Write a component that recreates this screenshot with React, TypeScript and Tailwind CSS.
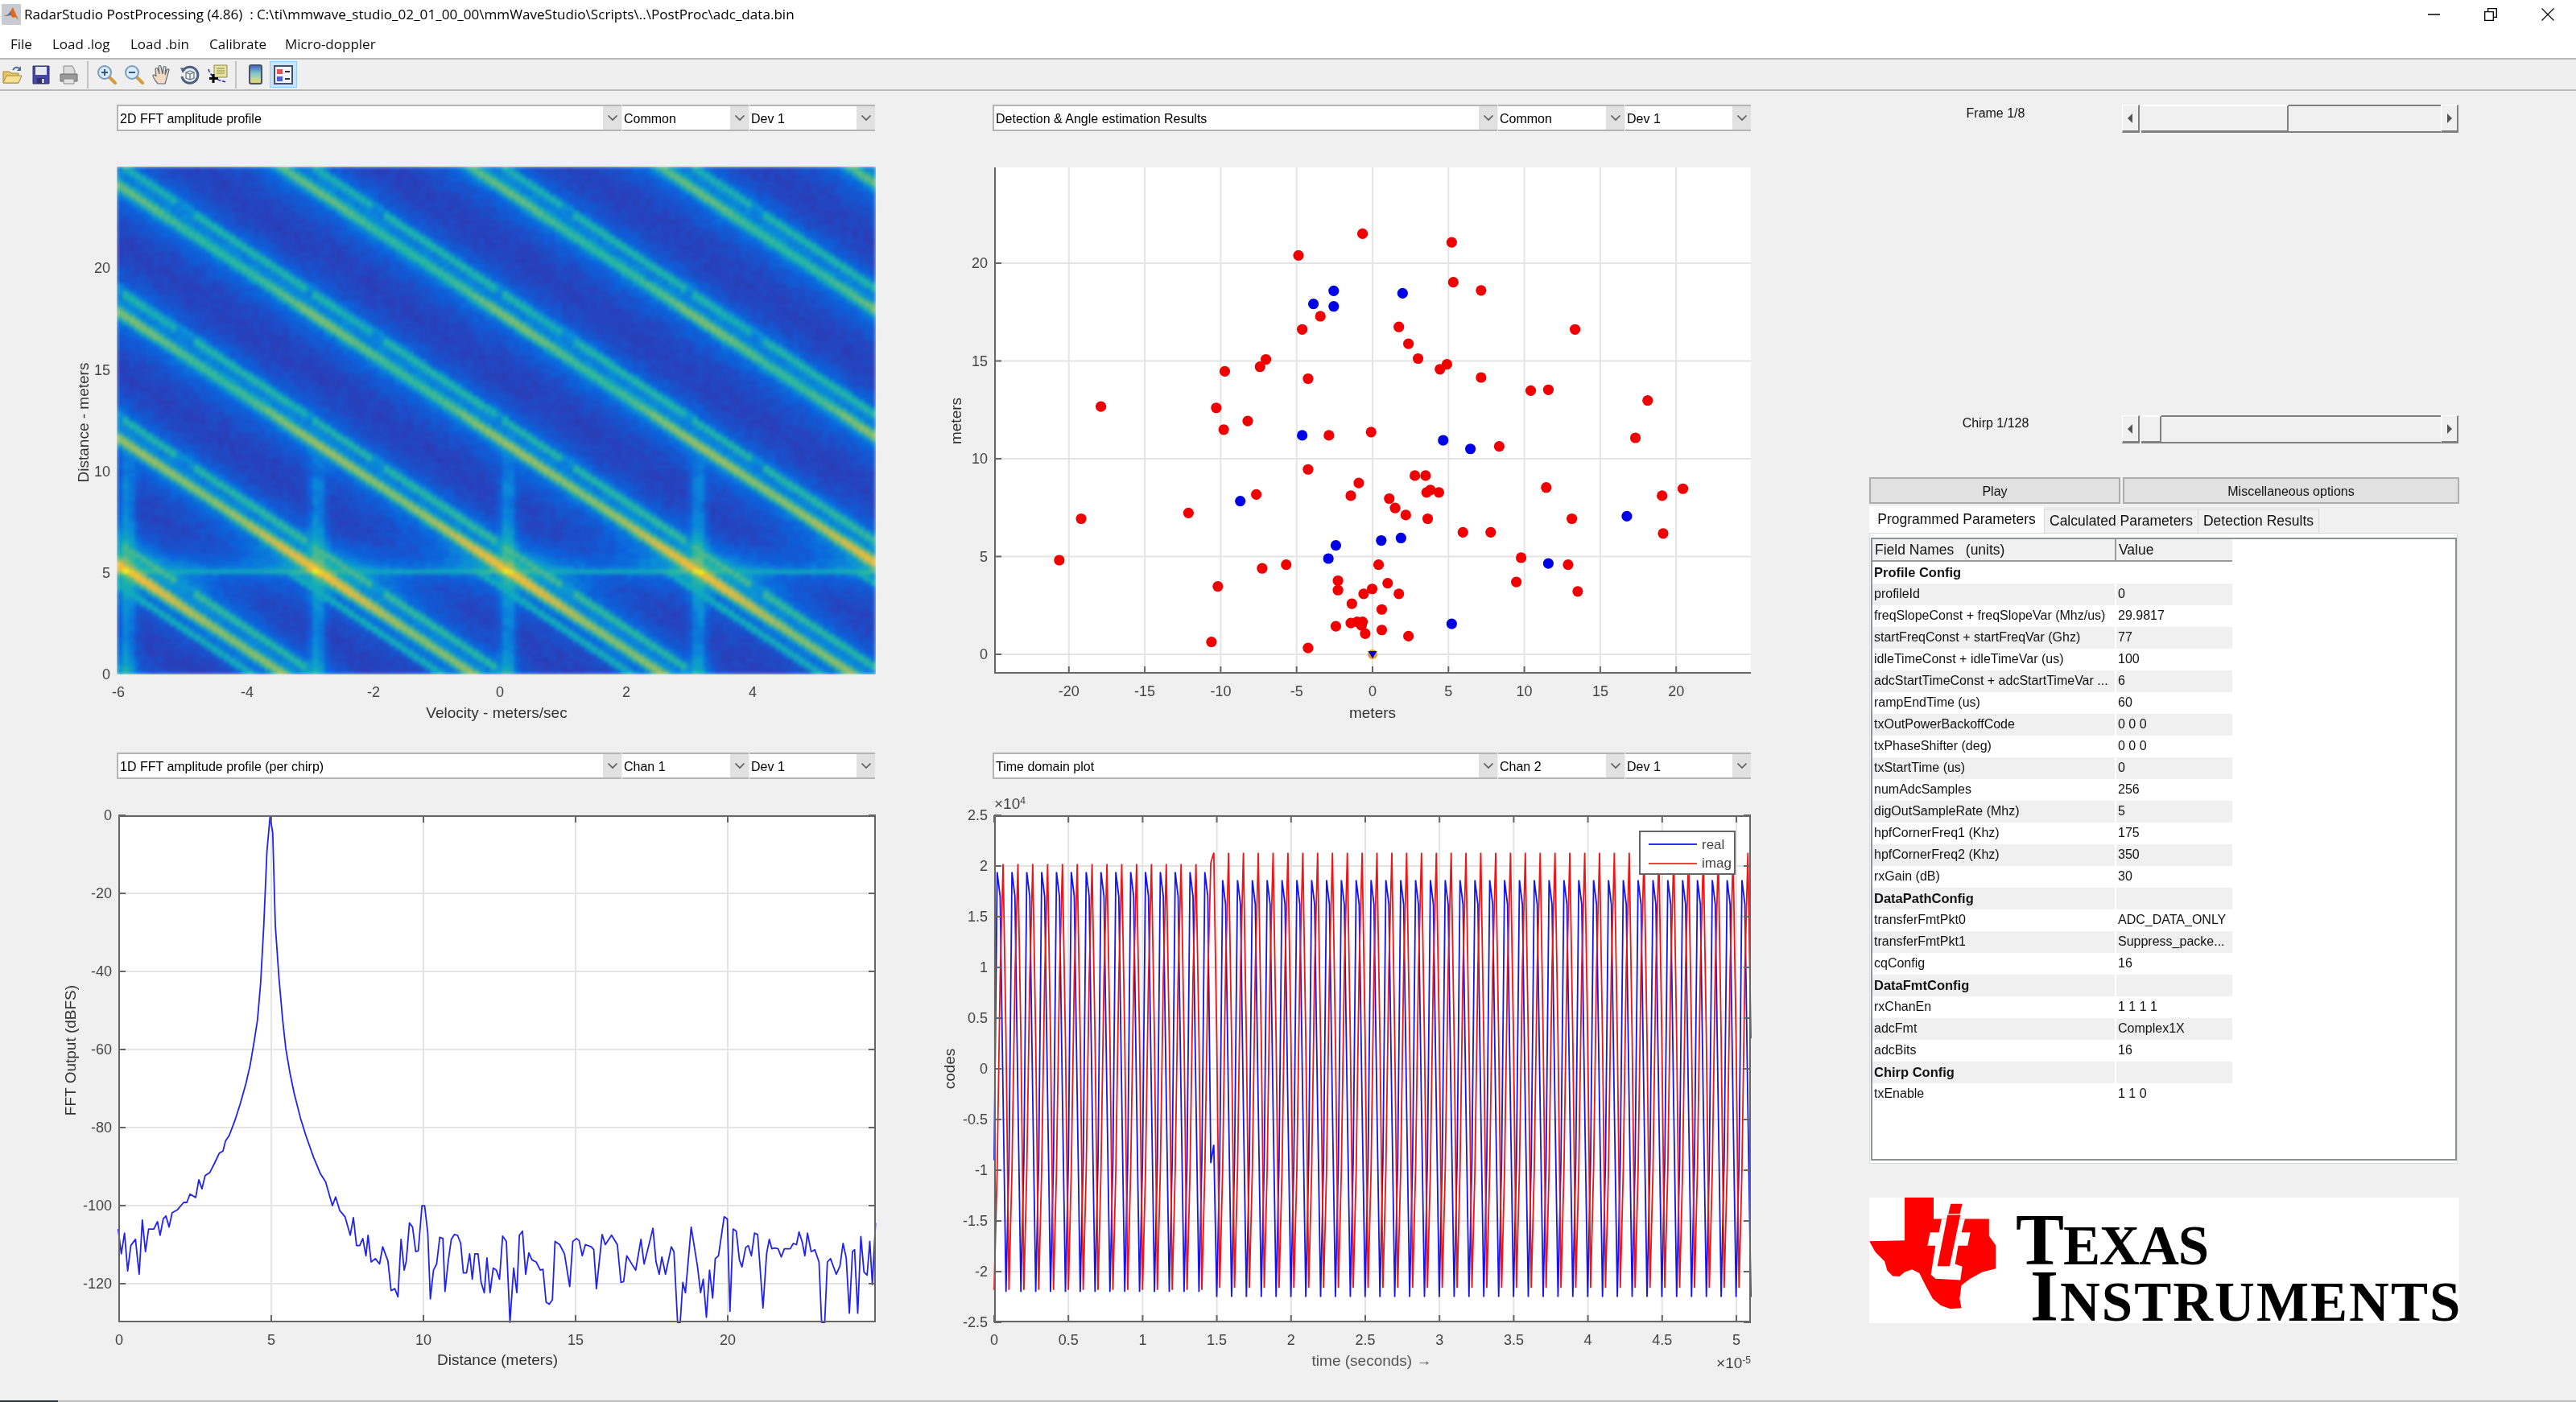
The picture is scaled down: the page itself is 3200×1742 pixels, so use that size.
import React from "react";

const sans = "font-['Liberation_Sans',Arial,sans-serif]";

/* ---------- heatmap ---------- */
const stops: [number, number[]][] = [
  [0, [43, 42, 154]], [0.12, [42, 61, 184]], [0.25, [10, 98, 220]], [0.36, [10, 142, 216]],
  [0.46, [16, 170, 188]], [0.55, [47, 185, 154]], [0.66, [141, 189, 104]], [0.8, [216, 186, 72]],
  [0.9, [248, 187, 56]], [1, [249, 249, 15]],
];
function cmap(v: number) {
  v = Math.max(0, Math.min(1, v));
  for (let i = 1; i < stops.length; i++) {
    if (v <= stops[i][0]) {
      const [a, ca] = stops[i - 1];
      const [b, cb] = stops[i];
      const t = (v - a) / (b - a);
      const c = ca.map((q, j) => Math.round(q + (cb[j] - q) * t));
      return `rgb(${c[0]},${c[1]},${c[2]})`;
    }
  }
  return "rgb(249,249,15)";
}
function heatPaths(w: number, h: number) {
  const cols = 128, rows = 126;
  let seed = 12345;
  const rnd = () => { seed = (seed * 1664525 + 1013904223) >>> 0; return seed / 4294967296; };
  const mod = (a: number, b: number) => ((a % b) + b) % b;
  const groups: Record<string, string> = {};
  const cw = w / cols, ch = h / rows;
  for (let r = 0; r < rows; r++) {
    for (let c = 0; c < cols; c++) {
      const zx = 70 + (c + 0.5) * (1448 / cols);
      const zy = 38 + (r + 0.5) * (1374 / rows);
      const d = zy - (1130 + 0.945 * (zx - 90));
      const m = mod(d + 171, 342) - 171;
      const rowDist = Math.abs(zy - 1133);
      const amp = 0.59 + 0.05 * Math.cos((2 * Math.PI * (zx - 90)) / 363) + 0.31 * Math.exp(-rowDist / 260);
      const main = Math.exp(-((m / 26) ** 2)) * amp;
      const g1 = mod(zx - 435 + 181, 363) - 181;
      const g2 = mod(zx - 565 + 181, 363) - 181;
      const gap = Math.abs(g1) < 8 || Math.abs(g2) < 14;
      const tm = m + 58 + (gap ? 8 : 0);
      const teal = Math.exp(-((tm / 21) ** 2)) * (gap ? 0.38 : 0.53 + 0.08 * Math.exp(-rowDist / 200));
      const tm2 = m - 56;
      const teal2 = zy > 1133 ? Math.exp(-((tm2 / 19) ** 2)) * 0.5 : 0;
      const base = 0.085 + rnd() * 0.055;
      const skirt = 0.24 * Math.exp(-Math.abs(m) / 66) + 0.12 * Math.exp(-Math.abs(m + 58) / 42);
      const glow = 0.2 * Math.exp(-rowDist / 45) * (zy < 1133 ? 1 : 0.7);
      const dx = mod(zx - 90 + 181, 363) - 181;
      const vFade = zy > 900 ? 1 : Math.exp((zy - 900) / 60);
      const vert = 0.2 * Math.exp(-((dx / 15) ** 2)) * vFade;
      const line = Math.exp(-((rowDist / 9) ** 2)) * (0.47 + 0.15 * Math.exp(-((dx / 60) ** 2)));
      const spot = Math.exp(-((dx / 24) ** 2) - ((rowDist / 15) ** 2)) * 1.04;
      const v = Math.max(base + skirt + glow + vert, main, teal, teal2, line, spot);
      const q = cmap(Math.round(v * 110) / 110);
      groups[q] = (groups[q] || "") + `M${(c * cw).toFixed(2)} ${(r * ch).toFixed(2)}h${(cw + 0.4).toFixed(2)}v${(ch + 0.4).toFixed(2)}h-${(cw + 0.4).toFixed(2)}z`;
    }
  }
  return Object.entries(groups);
}

/* ---------- data ---------- */
const red = [[803,334],[970,355],[683,387],[973,452],[1025,472],[724,535],[690,567],[871,561],[1201,567],[889,602],[907,638],[622,640],[611,658],[545,669],[961,652],[948,664],[701,687],[1025,684],[1118,716],[1151,714],[1337,740],[313,755],[529,758],[588,790],[543,811],[740,825],[819,817],[1314,831],[1059,852],[701,908],[901,923],[921,923],[796,941],[1147,952],[1403,955],[604,969],[781,972],[923,964],[930,958],[946,964],[1364,972],[853,979],[864,1002],[477,1014],[884,1019],[276,1028],[925,1028],[1195,1028],[991,1061],[1043,1061],[1366,1064],[1100,1123],[235,1129],[660,1140],[833,1140],[1188,1140],[615,1149],[757,1179],[850,1185],[1091,1182],[532,1193],[757,1202],[821,1199],[805,1211],[871,1211],[1206,1205],[783,1235],[839,1249],[781,1282],[793,1279],[803,1279],[801,1288],[753,1290],[839,1299],[808,1308],[889,1314],[520,1328],[701,1343]];
const blue = [[749,473],[711,505],[749,511],[878,479],[690,825],[954,837],[1005,858],[574,985],[1298,1022],[838,1081],[875,1075],[753,1093],[739,1125],[1151,1137],[970,1284]];
const fft = [[72,1190],[78,1250],[84,1200],[90,1292],[96,1230],[105,1215],[112,1300],[118,1168],[124,1245],[130,1190],[140,1190],[147,1172],[152,1205],[158,1165],[163,1158],[169,1185],[175,1150],[185,1143],[197,1125],[203,1125],[209,1105],[220,1113],[226,1070],[232,1092],[238,1060],[247,1052],[255,1032],[265,1005],[272,1000],[277,975],[284,962],[295,925],[305,885],[316,835],[324,790],[332,730],[338,680],[344,590],[350,450],[356,270],[362,185],[367,225],[372,450],[379,580],[386,680],[392,750],[400,810],[408,860],[420,920],[431,965],[445,1015],[458,1055],[468,1075],[481,1133],[487,1112],[495,1145],[505,1160],[515,1205],[521,1162],[527,1230],[533,1230],[539,1213],[545,1255],[549,1205],[555,1270],[563,1262],[571,1275],[577,1233],[587,1268],[593,1340],[600,1335],[606,1355],[612,1215],[618,1290],[622,1268],[628,1175],[634,1185],[640,1245],[645,1243],[652,1133],[657,1133],[663,1200],[668,1360],[674,1290],[680,1275],[686,1210],[692,1213],[696,1342],[702,1270],[708,1215],[714,1203],[720,1205],[726,1225],[731,1297],[737,1297],[743,1250],[748,1312],[753,1250],[759,1250],[765,1320],[771,1345],[776,1260],[782,1345],[788,1285],[794,1290],[800,1312],[806,1207],[813,1220],[820,1417],[827,1285],[833,1345],[838,1205],[844,1195],[850,1300],[856,1248],[862,1265],[870,1270],[878,1290],[883,1288],[889,1368],[895,1373],[901,1362],[906,1220],[915,1228],[924,1250],[934,1330],[940,1220],[947,1213],[952,1218],[958,1255],[964,1228],[975,1233],[980,1240],[985,1335],[996,1203],[1002,1228],[1014,1205],[1025,1228],[1032,1320],[1037,1318],[1043,1255],[1055,1280],[1060,1290],[1070,1215],[1076,1275],[1085,1230],[1093,1188],[1099,1270],[1105,1300],[1110,1258],[1117,1300],[1128,1233],[1133,1245],[1140,1417],[1145,1417],[1150,1320],[1155,1345],[1166,1185],[1178,1280],[1184,1345],[1189,1312],[1195,1405],[1201,1290],[1207,1358],[1212,1262],[1218,1255],[1229,1160],[1235,1165],[1240,1390],[1246,1190],[1252,1195],[1258,1265],[1263,1282],[1270,1235],[1275,1230],[1281,1255],[1287,1200],[1293,1203],[1303,1382],[1310,1250],[1315,1215],[1320,1238],[1326,1236],[1332,1238],[1338,1258],[1344,1238],[1355,1238],[1361,1225],[1367,1228],[1372,1197],[1378,1222],[1383,1255],[1388,1200],[1395,1245],[1402,1240],[1410,1270],[1415,1417],[1421,1417],[1426,1270],[1432,1262],[1443,1300],[1450,1280],[1456,1225],[1462,1260],[1468,1395],[1474,1245],[1478,1240],[1484,1395],[1490,1208],[1496,1295],[1502,1302],[1507,1220],[1512,1325],[1518,1175]];

function wave() {
  const b: string[] = [], r: string[] = [];
  const h = 630, w = 940, ppu = 126, dx = w / 255;
  const b1 = [1.94, 1.7, -0.3, -2.2, -0.9], r1 = [2.02, 0.3, -2.18, -1.0, 0.9];
  const b2 = [1.86, 1.62, -0.4, -2.25, -0.9], r2 = [2.13, 0.3, -2.16, -1.0, 1.0];
  for (let n = 0; n < 256; n++) {
    let vb: number, vr: number;
    if (n < 73) { vb = b1[((n - 1) % 5 + 5) % 5]; vr = r1[((n - 3) % 5 + 5) % 5]; }
    else if (n === 73) { vb = -0.93; vr = 2.03; }
    else if (n === 74) { vb = -0.75; vr = 2.13; }
    else { vb = b2[((n - 2) % 5 + 5) % 5]; vr = r2[((n - 4) % 5 + 5) % 5]; }
    b.push(`${(n * dx).toFixed(1)},${(h / 2 - vb * ppu).toFixed(1)}`);
    r.push(`${(n * dx).toFixed(1)},${(h / 2 - vr * ppu).toFixed(1)}`);
  }
  return { b: b.join(" "), r: r.join(" ") };
}

const rows: [string, string, number?][] = [
  ["Profile Config", "", 1], ["profileId", "0"], ["freqSlopeConst + freqSlopeVar (Mhz/us)", "29.9817"],
  ["startFreqConst + startFreqVar (Ghz)", "77"], ["idleTimeConst + idleTimeVar (us)", "100"],
  ["adcStartTimeConst + adcStartTimeVar ...", "6"], ["rampEndTime (us)", "60"], ["txOutPowerBackoffCode", "0 0 0"],
  ["txPhaseShifter (deg)", "0 0 0"], ["txStartTime (us)", "0"], ["numAdcSamples", "256"], ["digOutSampleRate (Mhz)", "5"],
  ["hpfCornerFreq1 (Khz)", "175"], ["hpfCornerFreq2 (Khz)", "350"], ["rxGain (dB)", "30"], ["DataPathConfig", "", 1],
  ["transferFmtPkt0", "ADC_DATA_ONLY"], ["transferFmtPkt1", "Suppress_packe..."], ["cqConfig", "16"], ["DataFmtConfig", "", 1],
  ["rxChanEn", "1 1 1 1"], ["adcFmt", "Complex1X"], ["adcBits", "16"], ["Chirp Config", "", 1], ["txEnable", "1 1 0"],
];

/* ---------- small pieces ---------- */
function Chevron() {
  return (
    <svg width="14" height="9" viewBox="0 0 14 9" fill="none" stroke="#5a5a5a" strokeWidth="1.6">
      <path d="M1.5 1.5 7 7l5.500-5.500" />
    </svg>
  );
}
function Sel({ text, w }: { text: string; w: string }) {
  return (
    <div className={`${w} h-full flex bg-white border-y-2 border-[#b4b4b4] first:border-l-2`}>
      <div className="flex-1 pl-[2px] pt-[2px] flex items-center text-[16px] leading-none text-black whitespace-nowrap overflow-hidden">{text}</div>
      <div className="w-[23px] bg-[#e1e1e1] flex items-center justify-center"><Chevron /></div>
    </div>
  );
}
function SelRow({ a, b, c }: { a: string; b: string; c: string }) {
  return (
    <div className="h-[33px] flex gap-[1px] pr-0">
      <Sel text={a} w="w-[627px]" />
      <Sel text={b} w="w-[157px]" />
      <Sel text={c} w="w-[156px]" />
    </div>
  );
}

type T = [number, string];
function Axes({ w, h, xt, yt, xl, yl, xlx, yly, box = true, lx = 66, children, tickY = 27, xlY = 52, grid = true, muted }: {
  w: number; h: number; xt: T[]; yt: T[]; xl: string; yl: string; xlx: number; yly: number; box?: boolean; lx?: number;
  children?: React.ReactNode; tickY?: number; xlY?: number; grid?: boolean; muted?: boolean;
}) {
  return (
    <svg width={w} height={h} viewBox={`0 0 ${w} ${h}`} className="block overflow-visible">
      {grid && xt.map(([x], i) => <line key={i} x1={x} x2={x} y1={0} y2={h} stroke="#e4e4e4" strokeWidth="2" />)}
      {grid && yt.map(([y], i) => <line key={i} x1={0} x2={w} y1={y} y2={y} stroke="#e4e4e4" strokeWidth="2" />)}
      {children}
      {grid && (
        <g stroke="#666" strokeWidth="2" fill="none">
          <path d={box ? `M1 1H${w - 1}V${h - 1}H1Z` : `M1 0V${h - 1}H${w}`} />
          {xt.map(([x], i) => <path key={i} d={box ? `M${x} ${h}v-9M${x} 0v9` : `M${x} ${h}v-9`} />)}
          {yt.map(([y], i) => <path key={i} d={box ? `M0 ${y}h9M${w} ${y}h-9` : `M0 ${y}h9`} />)}
        </g>
      )}
      <g className="text-[18px] fill-[#444]">
        {xt.map(([x, l], i) => <text key={i} x={x} y={h + tickY} textAnchor="middle">{l}</text>)}
        {yt.map(([y, l], i) => <text key={i} x={-8} y={y + 6} textAnchor="end">{l}</text>)}
        <text x={xlx} y={h + xlY} textAnchor="middle" className={`text-[19px] ${muted ? "fill-[#555]" : "fill-[#333]"}`}>{xl}</text>
        <text transform={`translate(${-lx},${yly}) rotate(-90)`} textAnchor="middle" className="text-[19px] fill-[#333]">{yl}</text>
      </g>
    </svg>
  );
}

function Heat() {
  const w = 943, h = 631;
  const paths = React.useMemo(() => heatPaths(w, h), []);
  const xt: T[] = [[2, "-6"], [162, "-4"], [319, "-2"], [476, "0"], [633, "2"], [790, "4"]].map(([x, l]) => [x as number, l as string]);
  const yt: T[] = [[631, "0"], [505, "5"], [379, "10"], [253, "15"], [126, "20"]].map(([y, l]) => [y as number, l as string]);
  return (
    <div className="relative w-[943px] h-[631px]">
      <div className="w-[943px] h-[631px] overflow-hidden">
        <svg width={w} height={h} viewBox={`0 0 ${w} ${h}`} className="block blur-[2px]" shapeRendering="crispEdges">
          {paths.map(([c, d]) => <path key={c} d={d} fill={c} />)}
        </svg>
      </div>
      <div className="absolute left-0 top-0">
        <Axes w={w} h={h} xt={xt} yt={yt} xl="Velocity - meters/sec" yl="Distance - meters" xlx={472} yly={318} lx={35} grid={false} tickY={28} xlY={54} />
      </div>
    </div>
  );
}

function Scatter() {
  const w = 940, h = 629;
  const X = (z: number) => z / 1.5077 + 1160 - 1235;
  const Y = (z: number) => z / 1.96 + 120 - 208;
  const xt: T[] = [-20, -15, -10, -5, 0, 5, 10, 15, 20].map((v) => [470 + v * 18.86, String(v)]);
  const yt: T[] = [0, 5, 10, 15, 20].map((v) => [605 - v * 24.3, String(v)]);
  return (
    <div className="bg-white w-[940px] h-[629px]">
      <Axes w={w} h={h} xt={xt} yt={yt} xl="meters" yl="meters" xlx={470} yly={315} box={false} lx={41} tickY={28} xlY={55}>
        {red.map(([x, y], i) => <circle key={i} cx={X(x)} cy={Y(y)} r="6.600" fill="#f00000" />)}
        {blue.map(([x, y], i) => <circle key={i} cx={X(x)} cy={Y(y)} r="6.600" fill="#0000e6" />)}
        <circle cx={470} cy={605} r="6" fill="#e8a020" />
        <path d={`M464.500 601h11L470 610z`} fill="#0000d0" />
      </Axes>
    </div>
  );
}

function FFT() {
  const w = 941, h = 630;
  const pts = fft.map(([x, y]) => `${(x / 1.537 + 100 - 147).toFixed(1)},${(y / 1.96 + 920 - 1013).toFixed(1)}`).join(" ");
  const xt: T[] = [0, 5, 10, 15, 20].map((v) => [1 + v * 37.8, String(v)]);
  const yt: T[] = [0, -20, -40, -60, -80, -100, -120].map((v) => [-v * 4.85, String(v)]);
  return (
    <div className="bg-white w-[941px] h-[630px]">
      <Axes w={w} h={h} xt={xt} yt={yt} xl="Distance (meters)" yl="FFT Output (dBFS)" xlx={471} yly={292} lx={53} tickY={28} xlY={53}>
        <polyline points={pts} fill="none" stroke="#2222ee" strokeWidth="1.8" strokeLinejoin="round" />
      </Axes>
    </div>
  );
}

function Time() {
  const w = 940, h = 630;
  const { b, r } = React.useMemo(wave, []);
  const xt: T[] = [0, 0.5, 1, 1.5, 2, 2.5, 3, 3.5, 4, 4.5, 5].map((v) => [v * 184.4, String(v)]);
  const yt: T[] = [2.5, 2, 1.5, 1, 0.5, 0, -0.5, -1, -1.5, -2, -2.5].map((v) => [315 - v * 126, String(v)]);
  return (
    <div className="relative bg-white w-[940px] h-[630px]">
      <Axes w={w} h={h} xt={xt} yt={yt} xl="time  (seconds) →" yl="codes" xlx={469} yly={315} lx={49} tickY={28} xlY={54} muted>
        <polyline points={b} fill="none" stroke="#1414f0" strokeWidth="1.8" />
        <polyline points={r} fill="none" stroke="#f01414" strokeWidth="1.8" />
      </Axes>
      <div className="absolute left-[801px] top-[19px] w-[120px] h-[55px] bg-white border-2 border-[#666] text-[17px] text-[#444] leading-none">
        <div className="flex items-center h-[24px] mt-[3px]"><span className="ml-[10px] w-[60px] h-[2px] bg-[#3030f0]" /><span className="ml-[6px]">real</span></div>
        <div className="flex items-center h-[23px]"><span className="ml-[10px] w-[60px] h-[2px] bg-[#f04040]" /><span className="ml-[6px]">imag</span></div>
      </div>
      <div className="absolute left-0 top-[-24px] text-[19px] text-[#444] leading-none whitespace-nowrap">×10<sup className="text-[12px]">4</sup></div>
      <div className="absolute right-0 top-[671px] text-[19px] text-[#444] leading-none whitespace-nowrap">×10<sup className="text-[12px]">-5</sup></div>
    </div>
  );
}

function Arrow({ left }: { left?: boolean }) {
  return (
    <svg width="7" height="12" viewBox="0 0 7 12"><path d={left ? "M6 0v12L0 6z" : "M1 0v12l6-6z"} fill="#555" /></svg>
  );
}
function Slider({ thumb }: { thumb: string }) {
  const btn = "w-[22px] h-[35px] flex items-center justify-center border-r-2 border-b-[3px] border-[#808080] border-t border-l border-t-white border-l-white";
  return (
    <div className="w-[418px] h-[35px] flex bg-[#f0f0f0]">
      <div className={btn}><Arrow left /></div>
      <div className="w-[2px]" />
      <div className={`${thumb} h-[35px] border-t-2 border-t-white border-r-2 border-r-[#808080] border-b-[3px] border-b-[#808080]`} />
      <div className="flex-1 h-[35px] border-t-2 border-t-[#808080] border-b-2 border-b-[#808080]" />
      <div className={btn}><Arrow /></div>
    </div>
  );
}

function Logo() {
  return (
    <div className="w-[733px] h-[156px] bg-white flex">
      <svg width="160" height="143" viewBox="18 22 480 430" className="block shrink-0">
        <path fill="#f00" d="M150 22H258V102H465V165L490 200V287L440 300 395 325 362 350 355 400 362 435 320 438 285 425 255 400 230 355 205 305 178 290 150 300 130 317 105 315 85 295 75 260 40 225 18 185 150 182Z" />
        <path fill="#fff" d="M288 102H375L362 152H395L385 202H350L338 270 365 280 358 330 265 325 248 310 265 202H235L245 152H278Z" />
        <path fill="#f00" d="M310 87H358L318 278H272Z" />
        <path fill="#f00" d="M322 45H365L356 83H313Z" />
      </svg>
      <div className="flex-1 font-['Liberation_Serif',serif] font-bold text-black leading-none">
        <div className="ml-[22px] mt-[18px] h-[70px] whitespace-nowrap text-[69px] leading-[70px] tracking-[-1px]"><span className="text-[90px]">T</span>EXAS</div>
        <div className="ml-[40px] h-[68px] whitespace-nowrap text-[69px] leading-[70px] tracking-[2px]"><span className="text-[90px]">I</span>NSTRUMENTS</div>
      </div>
    </div>
  );
}

function Tool({ children, className = "" }: { children: React.ReactNode; className?: string }) {
  return <div className={`w-[26px] h-[26px] flex items-center justify-center ${className}`}>{children}</div>;
}

function Toolbar() {
  return (
    <div className="h-[41px] bg-[#efefef] border-b-2 border-[#b8b8b8] border-t-2 border-t-[#b8b8b8] flex items-center pl-[2px] shrink-0">
      <Tool className="mr-[10px]">
        <svg width="25" height="24" viewBox="0 0 25 24"><path d="M1 8h8l2 2h9v12H1z" fill="#e8c860" stroke="#a08a40" /><path d="M1 22l4-9h19l-4 9z" fill="#f6e28e" stroke="#a08a40" /><path d="M13 6c2-4 6-4 8-2" stroke="#4a6a9a" strokeWidth="2" fill="none" /><path d="M23 1v6h-5z" fill="#4a6a9a" /></svg>
      </Tool>
      <Tool className="mr-[8px]">
        <svg width="22" height="24" viewBox="0 0 22 24"><path d="M1 1h20v22H1z" fill="#4646a8" stroke="#30306e" /><path d="M4 2h14v10H4z" fill="#e8e8f0" /><path d="M6 16h10v7H6z" fill="#30306e" /><path d="M12 17h3v5h-3z" fill="#c8c8d8" /></svg>
      </Tool>
      <Tool className="mr-[10px]">
        <svg width="23" height="24" viewBox="0 0 23 24"><path d="M5 1h11l3 6v5H5z" fill="#dcdcdc" stroke="#8a8a8a" /><path d="M1 11h21v9H1z" fill="#9a9a9a" stroke="#6a6a6a" /><path d="M5 17h13v6H5z" fill="#e4e4e4" stroke="#8a8a8a" /></svg>
      </Tool>
      <div className="w-[2px] h-[34px] bg-[#c4c4c4] mr-[9px]" />
      <Tool className="mr-[8px]">
        <svg width="25" height="25" viewBox="0 0 25 25"><path d="M15 15l8 8" stroke="#d99a3a" strokeWidth="4" strokeLinecap="round" /><circle cx="10" cy="10" r="8" fill="#d8ecfa" stroke="#7a9cc0" strokeWidth="2" /><path d="M10 6v8M6 10h8" stroke="#38587c" strokeWidth="2" /></svg>
      </Tool>
      <Tool className="mr-[9px]">
        <svg width="25" height="25" viewBox="0 0 25 25"><path d="M15 15l8 8" stroke="#d99a3a" strokeWidth="4" strokeLinecap="round" /><circle cx="10" cy="10" r="8" fill="#d8ecfa" stroke="#7a9cc0" strokeWidth="2" /><path d="M6 10h8" stroke="#38587c" strokeWidth="2" /></svg>
      </Tool>
      <Tool className="mr-[8px]">
        <svg width="25" height="25" viewBox="0 0 25 25"><path d="M7 24c-2-3-6-7-6-10 0-2 3-1 4 1L4 6c0-2 3-2 3 0l2 6-1-9c0-2 3-2 3 0l2 9 1-8c0-2 3-2 3 0l-1 9 2-6c1-2 3-1 3 0l-3 10c-1 3-1 5-2 7z" fill="#f4dcc4" stroke="#5a6a7a" strokeWidth="1.200" /></svg>
      </Tool>
      <Tool className="mr-[9px]">
        <svg width="25" height="24" viewBox="0 0 25 24"><path d="M5 6a10 10 0 1 1-2 8" fill="none" stroke="#4a6080" strokeWidth="3" /><path d="M1 3l7 1-4 6z" fill="#4a6080" /><path d="M8 9l5-2 5 2v7l-5 2-5-2zM8 9l5 2 5-2M13 11v7" fill="#eee" stroke="#6a7a8a" strokeWidth="1.300" /></svg>
      </Tool>
      <Tool>
        <svg width="25" height="25" viewBox="0 0 25 25"><path d="M8 1h16v15H8z" fill="#e8e49c" stroke="#8a8a50" /><path d="M11 5h10M11 8h10M11 11h10" stroke="#8a8a50" /><path d="M1 6c2 6 5 9 8 11s8 4 15 5" fill="none" stroke="#2020d0" strokeWidth="1.500" strokeDasharray="4 2" /><path d="M7 12v11M2 17.500h11" stroke="#000" strokeWidth="3" /></svg>
      </Tool>
      <div className="w-[2px] h-[34px] bg-[#c4c4c4] ml-[9px] mr-[10px]" />
      <Tool className="mr-[5px]">
        <svg width="17" height="25" viewBox="0 0 17 25"><defs><linearGradient id="pc" x1="0" y1="0" x2="0" y2="1"><stop offset="0" stopColor="#3f5fc8" /><stop offset=".45" stopColor="#7fc8c8" /><stop offset=".75" stopColor="#c8d890" /><stop offset="1" stopColor="#f0c860" /></linearGradient></defs><rect x="1" y="1" width="15" height="23" rx="2" fill="url(#pc)" stroke="#44546a" strokeWidth="2" /></svg>
      </Tool>
      <div className="w-[34px] h-[33px] bg-[#cce4f7] border border-[#99c9ef] flex items-center justify-center">
        <svg width="24" height="24" viewBox="0 0 24 24"><rect x="1" y="1" width="22" height="22" fill="#f2f4f6" stroke="#44546a" strokeWidth="2" /><rect x="4" y="5" width="7" height="6" fill="#e0555a" /><rect x="4" y="14" width="7" height="6" fill="#5060d8" /><path d="M14 8h6M14 17h6" stroke="#333" strokeWidth="2" /></svg>
      </div>
    </div>
  );
}

export default function App() {
  return (
    <div className={`w-[3200px] h-[1742px] bg-[#f0f0f0] flex flex-col overflow-hidden blur-[0.5px] ${sans}`}>
      <div className="h-[36px] bg-white flex items-center shrink-0 font-['Open_Sans',sans-serif]">
        <div className="w-[24px] h-[26px] ml-[2px] mr-[4px] bg-[#c8ccd2] flex items-center justify-center">
          <svg width="20" height="20" viewBox="0 0 20 20"><path d="M1 12l5-2 3-4 3-5 3 7 4 9-4-4-3 1-3-3-4 1z" fill="#e06a1c" /><path d="M1 12l5-2 3-4 1 5-3 0z" fill="#3a7ab8" /></svg>
        </div>
        <div className="text-[17.100px] text-black whitespace-pre">RadarStudio PostProcessing (4.86)  : C:\ti\mmwave_studio_02_01_00_00\mmWaveStudio\Scripts\..\PostProc\adc_data.bin</div>
        <div className="ml-auto flex items-center">
          <svg width="16" height="16" viewBox="0 0 16 16" className="mr-[54px]"><path d="M0 8h15" stroke="#000" strokeWidth="1.500" /></svg>
          <svg width="16" height="16" viewBox="0 0 16 16" className="mr-[55px]"><path d="M.7 4.700h10.600v10.600H.7zM4.700 4.700V.7h10.600v10.600h-4" fill="none" stroke="#000" strokeWidth="1.300" /></svg>
          <svg width="16" height="16" viewBox="0 0 16 16" className="mr-[27px]"><path d="M.5.5l15 15M15.500.5l-15 15" stroke="#000" strokeWidth="1.200" /></svg>
        </div>
      </div>
      <div className="h-[36px] bg-white flex items-center pl-[13px] shrink-0 text-[17px] text-[#111] font-['Open_Sans',sans-serif] leading-none">
        <span className="w-[52px]">File</span>
        <span className="w-[97px]">Load .log</span>
        <span className="w-[98px]">Load .bin</span>
        <span className="w-[94px]">Calibrate</span>
        <span>Micro-doppler</span>
      </div>
      <Toolbar />

      <div className="flex-1 flex pl-[145px] pt-[17px]">
        <div className="w-[943px] flex flex-col">
          <div className="h-[33px] w-[943px]"><SelRow a="2D FFT amplitude profile" b="Common" c="Dev 1" /></div>
          <div className="mt-[44px]"><Heat /></div>
          <div className="mt-[97px] h-[33px]"><SelRow a="1D FFT amplitude profile (per chirp)" b="Chan 1" c="Dev 1" /></div>
          <div className="mt-[45px] ml-[2px]"><FFT /></div>
        </div>
        <div className="w-[942px] ml-[145px] flex flex-col">
          <div className="h-[33px]"><SelRow a="Detection & Angle estimation Results" b="Common" c="Dev 1" /></div>
          <div className="mt-[45px] ml-[2px]"><Scatter /></div>
          <div className="mt-[98px] h-[33px]"><SelRow a="Time domain plot" b="Chan 2" c="Dev 1" /></div>
          <div className="mt-[45px] ml-[2px]"><Time /></div>
        </div>
        <div className="w-[733px] ml-[147px] flex flex-col text-[16px] text-[#111]">
          <div className="h-[35px] flex">
            <div className="w-[314px] text-center leading-[22px]">Frame 1/8</div>
            <Slider thumb="w-[183px]" />
          </div>
          <div className="h-[35px] flex mt-[351px]">
            <div className="w-[314px] text-center leading-[20px]">Chirp 1/128</div>
            <Slider thumb="w-[25px]" />
          </div>
          <div className="h-[33px] mt-[42px] flex gap-[3px]">
            <div className="w-[312px] bg-[#e1e1e1] border-2 border-[#adadad] flex items-center justify-center pt-[2px]">Play</div>
            <div className="w-[418px] bg-[#e1e1e1] border-2 border-[#adadad] flex items-center justify-center pt-[2px]">Miscellaneous options</div>
          </div>
          <div className="h-[33px] mt-[3px] flex items-end text-[17.500px]">
            <div className="w-[217px] h-[33px] bg-white flex items-center justify-center whitespace-nowrap">Programmed Parameters</div>
            <div className="w-[192px] h-[30px] bg-[#f0f0f0] border border-b-0 border-[#d9d9d9] flex items-center justify-center whitespace-nowrap">Calculated Parameters</div>
            <div className="w-[150px] h-[30px] bg-[#f0f0f0] border border-b-0 border-l-0 border-[#d9d9d9] flex items-center justify-center whitespace-nowrap">Detection Results</div>
          </div>
          <div className="w-[731px] h-[784px] bg-white border border-[#d9d9d9] pt-[5px] px-[1px]">
            <div className="w-[728px] h-[774px] bg-white border-2 border-[#8c9296]">
              <div className="w-[447px] h-[28px] flex bg-[#f0f0f0] border-b-2 border-[#9a9a9a] text-[17.500px]">
                <div className="w-[303px] pl-[3px] border-r-2 border-[#9a9a9a] whitespace-pre leading-[26px]">Field Names   (units)</div>
                <div className="pl-[3px] leading-[26px]">Value</div>
              </div>
              {rows.map(([a, b, bold], i) => (
                <div key={i} className={`w-[447px] h-[27px] flex text-[16px] leading-[26px] ${i % 2 ? "bg-[#f0f0f0]" : "bg-white"}`}>
                  <div className={`w-[303px] pl-[2px] border-r-2 border-white whitespace-nowrap overflow-hidden ${bold ? "font-bold text-[16.500px]" : ""}`}>{a}</div>
                  <div className="pl-[2px] whitespace-nowrap">{b}</div>
                </div>
              ))}
            </div>
          </div>
          <div className="mt-[42px]"><Logo /></div>
        </div>
      </div>
      <div className="h-[2px] shrink-0 flex bg-[#bcbcbc]"><div className="w-[72px] bg-[#263238]" /></div>
    </div>
  );
}
